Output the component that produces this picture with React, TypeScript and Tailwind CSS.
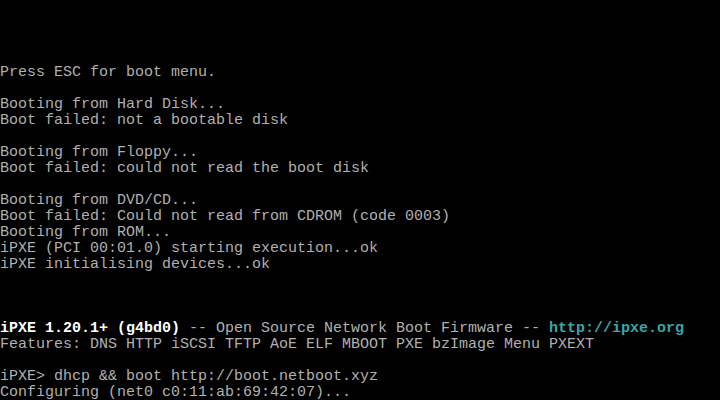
import React from "react";

type Seg = { t: string; c?: string };
const G = "text-[#b0b0b0]";
const rows: Seg[][] = [
  [],
  [],
  [],
  [],
  [{ t: "Press ESC for boot menu." }],
  [],
  [{ t: "Booting from Hard Disk..." }],
  [{ t: "Boot failed: not a bootable disk" }],
  [],
  [{ t: "Booting from Floppy..." }],
  [{ t: "Boot failed: could not read the boot disk" }],
  [],
  [{ t: "Booting from DVD/CD..." }],
  [{ t: "Boot failed: Could not read from CDROM (code 0003)" }],
  [{ t: "Booting from ROM..." }],
  [{ t: "iPXE (PCI 00:01.0) starting execution...ok" }],
  [{ t: "iPXE initialising devices...ok" }],
  [],
  [],
  [],
  [
    { t: "iPXE 1.20.1+ (g4bd0)", c: "text-white font-bold" },
    { t: " -- Open Source Network Boot Firmware -- " },
    { t: "http://ipxe.org", c: "text-[#3aa6a6] font-bold" },
  ],
  [{ t: "Features: DNS HTTP iSCSI TFTP AoE ELF MBOOT PXE bzImage Menu PXEXT" }],
  [],
  [{ t: "iPXE> dhcp && boot http://boot.netboot.xyz" }],
  [{ t: "Configuring (net0 c0:11:ab:69:42:07)..." }],
];

export default function App() {
  return (
    <div
      className="w-[720px] h-[400px] bg-black overflow-hidden pt-px"
      style={{ fontFamily: '"Liberation Mono", "DejaVu Sans Mono", monospace' }}
    >
      {rows.map((r, i) => (
        <div key={i} className={`h-4 text-[15px] leading-4 whitespace-pre ${G}`}>
          {r.map((s, j) => (
            <span key={j} className={s.c ?? ""}>
              {s.t}
            </span>
          ))}
        </div>
      ))}
    </div>
  );
}
